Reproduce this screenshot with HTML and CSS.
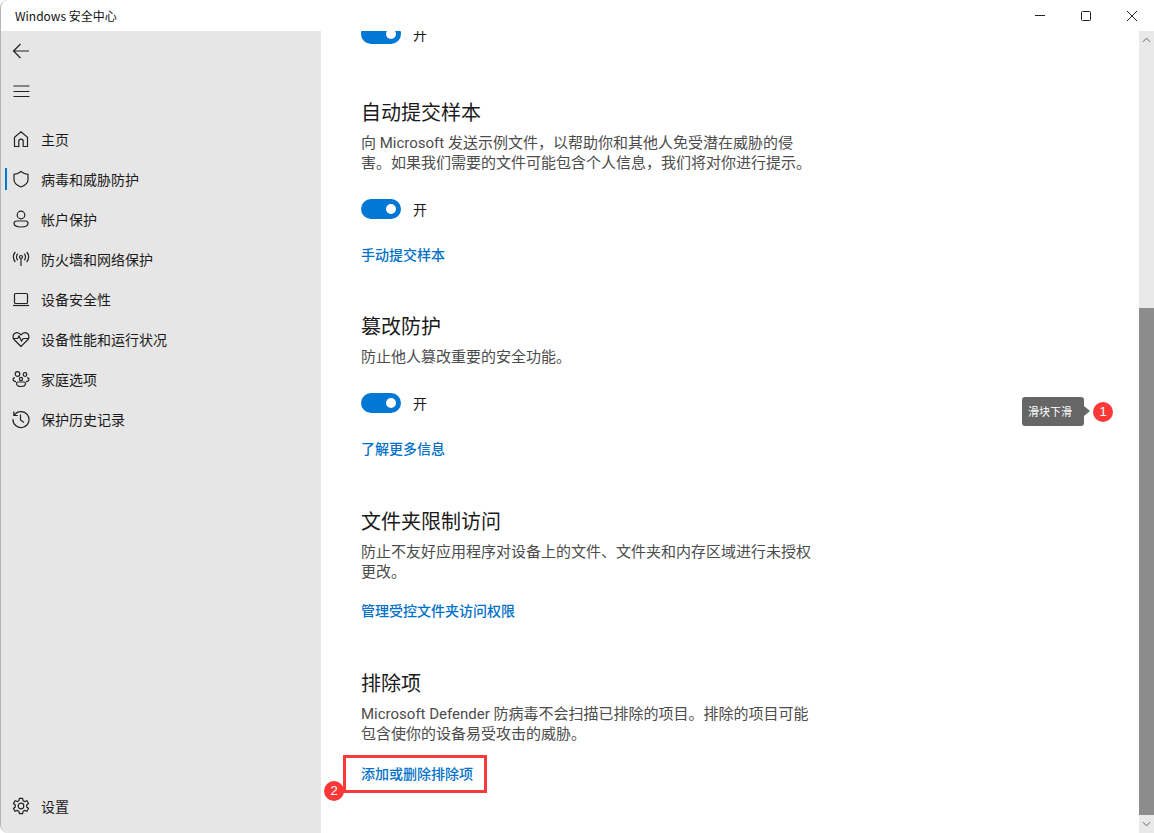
FILE: index.html
```html
<!DOCTYPE html>
<html lang="zh-CN">
<head>
<meta charset="utf-8">
<title>Windows 安全中心</title>
<link rel="stylesheet" href="styles.css">
</head>
<body>
<div class="window">
  <header class="titlebar">
    <span class="app-title">Windows 安全中心</span>
    <div class="win-controls">
      <svg class="win-btn" viewBox="0 0 12 12"><path d="M1 5.500h10"/></svg>
      <svg class="win-btn" viewBox="0 0 12 12"><rect x="1.500" y="1.500" width="9" height="9" rx="1"/></svg>
      <svg class="win-btn" viewBox="0 0 12 12"><path d="M1 1l10 10M11 1L1 11"/></svg>
    </div>
  </header>
  <div class="body">
    <nav class="sidebar">
      <div class="side-top">
        <svg class="ico" viewBox="0 0 20 20"><path d="M18 10H2.500M9.500 3L2.500 10l7 7"/></svg>
      </div>
      <div class="side-top">
        <svg class="ico" viewBox="0 0 20 20"><path d="M2.500 5h16M2.500 10.500h16M2.500 15.500h16"/></svg>
      </div>
      <ul class="nav-list">
        <li class="nav-item"><svg class="ico" viewBox="0 0 20 20"><path d="M3.500 17.500V8.200L10 2.700l6.500 5.500v9.300h-4.300v-5.200a2.200 2.200 0 0 0-4.400 0v5.200z"/></svg><span>主页</span></li>
        <li class="nav-item active"><svg class="ico" viewBox="0 0 20 20"><path d="M10 2.500c2.200 1.800 4.500 2.700 7 2.800v5c0 3.700-2.400 6.100-7 7.700-4.600-1.600-7-4-7-7.700v-5c2.500-.1 4.800-1 7-2.800z"/></svg><span>病毒和威胁防护</span></li>
        <li class="nav-item"><svg class="ico" viewBox="0 0 20 20"><circle cx="10" cy="6" r="3.800"/><path d="M5.500 12h9a2.500 2.500 0 0 1 2.500 2.500c0 2-3 3.500-7 3.500s-7-1.500-7-3.500A2.500 2.500 0 0 1 5.500 12z"/></svg><span>帐户保护</span></li>
        <li class="nav-item"><svg class="ico" viewBox="0 0 20 20"><circle cx="10" cy="8" r="1.500"/><path d="M10 9.500V17M6.800 4.800a4.500 4.500 0 0 0 0 6.400M13.200 4.800a4.500 4.500 0 0 1 0 6.400M4.300 3a7.500 7.500 0 0 0 0 10M15.700 3a7.500 7.500 0 0 1 0 10"/></svg><span>防火墙和网络保护</span></li>
        <li class="nav-item"><svg class="ico" viewBox="0 0 20 20"><rect x="3.500" y="4.500" width="13" height="10" rx="1"/><path d="M2 16.500h16"/></svg><span>设备安全性</span></li>
        <li class="nav-item"><svg class="ico" viewBox="0 0 20 20"><path d="M10 17.500L3.500 11C1.500 9 1.600 6 3.500 4.500 5.500 3 8 3.400 10 5.800c2-2.400 4.500-2.800 6.500-1.300 1.900 1.500 2 4.500 0 6.500z"/><path d="M1.800 9.500h4.700l1.500-2.500 2.500 5 1.700-2.500h6"/></svg><span>设备性能和运行状况</span></li>
        <li class="nav-item"><svg class="ico" viewBox="0 0 20 20"><circle cx="6.500" cy="5" r="2.300"/><circle cx="14" cy="5.500" r="1.800"/><circle cx="10" cy="10" r="1.600"/><path d="M4 8.800H3.200A1.500 1.500 0 0 0 2 10.300c0 1.300 1 2.200 3 2.400M16 8.800h.9A1.500 1.500 0 0 1 18 10.300c0 1.300-1 2.200-3 2.400M7 13h6a1.500 1.500 0 0 1 1.500 1.500c0 1.800-2 3-4.500 3s-4.500-1.200-4.500-3A1.500 1.500 0 0 1 7 13z"/></svg><span>家庭选项</span></li>
        <li class="nav-item"><svg class="ico" viewBox="0 0 20 20"><path d="M3.200 6.300A8 8 0 1 1 2 10M2.800 2.500v4h4M9.500 5.500V11l3.500 2.500"/></svg><span>保护历史记录</span></li>
      </ul>
      <div class="nav-item settings"><svg class="ico" viewBox="0 0 20 20"><circle cx="10" cy="10" r="2.800"/><path d="M8.400 2.300h3.200l.5 2.400 1.500.8 2.300-.8 1.600 2.800-1.800 1.600v1.800l1.800 1.600-1.600 2.800-2.300-.8-1.500.8-.5 2.400H8.400l-.5-2.400-1.500-.8-2.300.8-1.600-2.800 1.800-1.600V9.100L2.500 7.500l1.600-2.800 2.300.8 1.500-.8z"/></svg><span>设置</span></div>
    </nav>
    <main class="content">
      <div class="toggle-row clipped"><span class="toggle"></span><span>开</span></div>

      <section class="block block-auto">
        <h2>自动提交样本</h2>
        <p>向 Microsoft 发送示例文件，以帮助你和其他人免受潜在威胁的侵害。如果我们需要的文件可能包含个人信息，我们将对你进行提示。</p>
        <div class="toggle-row"><span class="toggle"></span><span>开</span></div>
        <a class="link link-gap">手动提交样本</a>
      </section>

      <section class="block block-tamper">
        <h2>篡改防护</h2>
        <p>防止他人篡改重要的安全功能。</p>
        <div class="toggle-row"><span class="toggle"></span><span>开</span></div>
        <a class="link link-gap">了解更多信息</a>
      </section>

      <section class="block block-folder">
        <h2>文件夹限制访问</h2>
        <p>防止不友好应用程序对设备上的文件、文件夹和内存区域进行未授权更改。</p>
        <a class="link link-folder">管理受控文件夹访问权限</a>
      </section>

      <section class="block block-excl">
        <h2>排除项</h2>
        <p>Microsoft Defender 防病毒不会扫描已排除的项目。排除的项目可能包含使你的设备易受攻击的威胁。</p>
        <div class="highlight">
          <a class="link">添加或删除排除项</a>
          <span class="badge badge-two">2</span>
        </div>
      </section>

      <div class="callout">
        <span class="tip">滑块下滑</span>
        <span class="badge">1</span>
      </div>
    </main>
    <div class="scrollbar">
      <svg class="sb-arrow" viewBox="0 0 10 6"><path d="M1 5l4-4 4 4"/></svg>
      <div class="sb-space"></div>
      <div class="sb-thumb"></div>
      <svg class="sb-arrow" viewBox="0 0 10 6"><path d="M1 1l4 4 4-4"/></svg>
    </div>
  </div>
</div>
</body>
</html>
```
FILE: styles.css
```css
* { box-sizing: border-box; }
html, body { margin: 0; height: 100%; background: #fff; overflow: hidden; }
body {
  font-family: "Noto Sans CJK SC", "Noto Sans", "Liberation Sans", sans-serif;
  color: #1a1a1a;
  font-size: 14px;
}
.window { height: 833px; display: flex; flex-direction: column; border-left: 1px solid #b5b5b5; border-radius: 8px 0 0 8px; overflow: hidden; }
.titlebar { height: 31px; flex: none; display: flex; align-items: center; justify-content: space-between; }
.app-title { margin-left: 14px; font-size: 12px; color: #111; }
.win-controls { display: flex; gap: 34px; margin-right: 16px; }
.win-btn { width: 12px; height: 12px; fill: none; stroke: #222; stroke-width: 1; }
.body { flex: 1; display: flex; min-height: 0; }

.sidebar { width: 320px; flex: none; background: #e6e6e6; display: flex; flex-direction: column; }
.ico { width: 20px; height: 20px; fill: none; stroke: #222; stroke-width: 1.2; flex: none; }
.side-top { height: 40px; display: flex; align-items: center; padding-left: 10px; }
.nav-list { list-style: none; margin: 8px 0 0; padding: 0; }
.nav-item { position: relative; height: 40px; display: flex; align-items: center; gap: 10px; padding-left: 10px; font-size: 14px; color: #1a1a1a; }
.nav-item.active::before { content: ""; position: absolute; left: 4px; top: 9px; width: 2px; height: 22px; background: #0078d4; }
.settings { margin-top: auto; margin-bottom: 7px; }

.content { position: relative; flex: 1; overflow: hidden; padding-left: 40px; }
.toggle-row { display: flex; align-items: center; gap: 12px; height: 20px; font-size: 14px; }
.clipped { margin-top: -7px; }
.toggle { position: relative; width: 40px; height: 20px; border-radius: 10px; background: #0078d4; display: block; }
.toggle::after { content: ""; position: absolute; right: 5px; top: 5px; width: 10px; height: 10px; border-radius: 50%; background: #fff; }
h2 { margin: 0; font-size: 20px; font-weight: 400; line-height: 28px; color: #1a1a1a; }
p { margin: 7px 0 0; width: 452px; font-family: Roboto, "Noto Sans CJK SC", sans-serif; font-size: 15px; line-height: 20px; color: #4c4c4c; }
.block .toggle-row { margin-top: 26px; }
.link { display: block; font-size: 14px; line-height: 20px; font-weight: 500; color: #0070c8; }
.link-gap { margin-top: 25px; }
.link-folder { margin-top: 18px; }
.block-auto { margin-top: 54px; }
.block-tamper { margin-top: 48px; }
.block-folder { margin-top: 49px; }
.block-excl { margin-top: 49px; }

.highlight { position: relative; width: 144px; height: 38px; margin: 11px 0 0 -18px; border: 3px solid #f93a3a; padding: 5px 0 0 15px; }
.badge { width: 20px; height: 20px; border-radius: 50%; background: #fb3838; color: #fff; font-size: 13px; line-height: 20px; text-align: center; font-family: "Liberation Sans", sans-serif; display: block; flex: none; }
.badge-two { position: absolute; left: -22px; top: 23px; }
.callout { position: absolute; left: 701px; top: 366px; display: flex; align-items: center; gap: 9px; }
.tip { position: relative; width: 62px; height: 29px; border-radius: 3px; background: #666; color: #fff; font-size: 11px; line-height: 29px; padding-left: 6px; }
.tip::after { content: ""; position: absolute; left: 100%; top: 9px; border-left: 6px solid #666; border-top: 5px solid transparent; border-bottom: 5px solid transparent; }

.scrollbar { width: 15px; flex: none; background: #e9e9e9; display: flex; flex-direction: column; align-items: center; }
.sb-arrow { width: 9px; height: 6px; fill: none; stroke: #555; stroke-width: 1; margin: 6px 0; flex: none; }
.sb-space { height: 259px; flex: none; }
.sb-thumb { width: 15px; flex: 1; background: #8c8c8c; }
```
